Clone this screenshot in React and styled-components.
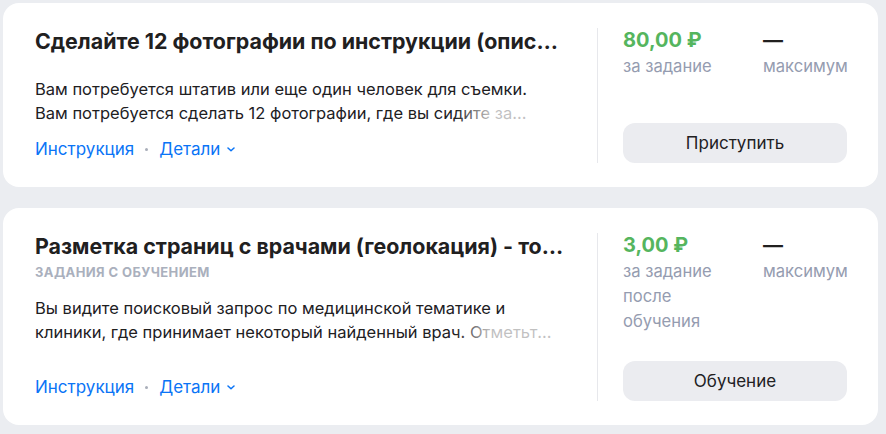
import React from "react";
import styled, { createGlobalStyle } from "styled-components";

const GlobalStyle = createGlobalStyle`
  body {
    margin: 0;
    background: #ebedf1;
    font-family: "Inter", "Noto Sans", sans-serif;
    -webkit-font-smoothing: antialiased;
  }
`;

const Page = styled.div`
  display: flex;
  flex-direction: column;
  gap: 21px;
  padding: 3px 8px 8px 3px;
`;

const Card = styled.div`
  display: flex;
  width: 875px;
  min-height: 184px;
  box-sizing: border-box;
  padding: 25px 31px 24px 32px;
  background: #fff;
  border-radius: 16px;
`;

const Main = styled.div`
  flex: 1;
  min-width: 0;
  display: flex;
  flex-direction: column;
  padding-right: 32px;
  border-right: 1px solid #e7e8ec;
`;

const Title = styled.div`
  font-size: 21.4px;
  line-height: 26px;
  font-weight: 700;
  color: #21201f;
  white-space: nowrap;
  overflow: hidden;
  text-overflow: ellipsis;
`;

const Label = styled.div`
  margin-top: 5px;
  font-size: 13px;
  line-height: 16px;
  font-weight: 700;
  letter-spacing: 0.4px;
  text-transform: uppercase;
  color: #aab0bd;
`;

const Description = styled.div`
  margin-top: ${(p) => p.$top}px;
  padding-right: 10px;
  font-size: 16.5px;
  line-height: 24px;
  color: #21201f;
`;

const Line = styled.div`
  position: relative;
  white-space: nowrap;
  overflow: hidden;
  text-overflow: ellipsis;

  &:last-child::after {
    content: "";
    position: absolute;
    right: 0;
    top: 0;
    bottom: 0;
    width: 100px;
    background: linear-gradient(90deg, rgba(255, 255, 255, 0), rgba(255, 255, 255, 0.72) 35%);
  }
`;

const Links = styled.div`
  margin-top: auto;
  padding-top: 10px;
  padding-bottom: 4px;
  display: flex;
  align-items: center;
  gap: 11px;
  font-size: 17px;
  line-height: 20px;
`;

const Link = styled.a`
  display: inline-flex;
  align-items: center;
  gap: 7px;
  color: #0a74f6;
  text-decoration: none;
  cursor: pointer;
`;

const Dot = styled.span`
  width: 3px;
  height: 3px;
  border-radius: 50%;
  background: #a9aeb9;
`;

const Side = styled.div`
  width: 224px;
  margin-left: 25px;
  display: flex;
  flex-direction: column;
`;

const Stats = styled.div`
  display: grid;
  grid-template-columns: 120px 1fr;
  column-gap: 20px;
  margin-bottom: 27px;
`;

const Price = styled.div`
  font-size: 20px;
  line-height: 24px;
  font-weight: 700;
  color: ${(p) => (p.$green ? "#55b55e" : "#21201f")};
`;

const Caption = styled.div`
  margin-top: 2px;
  font-size: 16.6px;
  line-height: 25px;
  color: #959cb0;
`;

const Button = styled.button`
  margin-top: auto;
  height: 40px;
  border: none;
  border-radius: 12px;
  background: #ebecf0;
  color: #21201f;
  font-family: inherit;
  font-size: 17px;
  cursor: pointer;
`;

const Chevron = () => (
  <svg width="8" height="5" viewBox="0 0 8 5" fill="none">
    <path d="M1 1l3 2.8L7 1" stroke="#0a74f6" strokeWidth="1.5" strokeLinecap="round" strokeLinejoin="round" />
  </svg>
);

const tasks = [
  {
    title: "Сделайте 12 фотографии по инструкции (описание внутри)",
    lines: [
      "Вам потребуется штатив или еще один человек для съемки.",
      "Вам потребуется сделать 12 фотографии, где вы сидите за…",
    ],
    price: "80,00 ₽",
    caption: "за задание",
    action: "Приступить",
    descTop: 23,
  },
  {
    title: "Разметка страниц с врачами (геолокация) - только по Москве",
    label: "Задания с обучением",
    lines: [
      "Вы видите поисковый запрос по медицинской тематике и",
      "клиники, где принимает некоторый найденный врач. Отметьте, подходит ли страница",
    ],
    price: "3,00 ₽",
    caption: "за задание после обучения",
    action: "Обучение",
    descTop: 16,
  },
];

const TaskCard = ({ task }) => (
  <Card>
    <Main>
      <Title>{task.title}</Title>
      {task.label && <Label>{task.label}</Label>}
      <Description $top={task.descTop}>
        {task.lines.map((line) => (
          <Line key={line}>{line}</Line>
        ))}
      </Description>
      <Links>
        <Link>Инструкция</Link>
        <Dot />
        <Link>
          Детали
          <Chevron />
        </Link>
      </Links>
    </Main>
    <Side>
      <Stats>
        <div>
          <Price $green>{task.price}</Price>
          <Caption>{task.caption}</Caption>
        </div>
        <div>
          <Price>—</Price>
          <Caption>максимум</Caption>
        </div>
      </Stats>
      <Button>{task.action}</Button>
    </Side>
  </Card>
);

export default function App() {
  return (
    <>
      <GlobalStyle />
      <Page>
        {tasks.map((t) => (
          <TaskCard key={t.title} task={t} />
        ))}
      </Page>
    </>
  );
}
